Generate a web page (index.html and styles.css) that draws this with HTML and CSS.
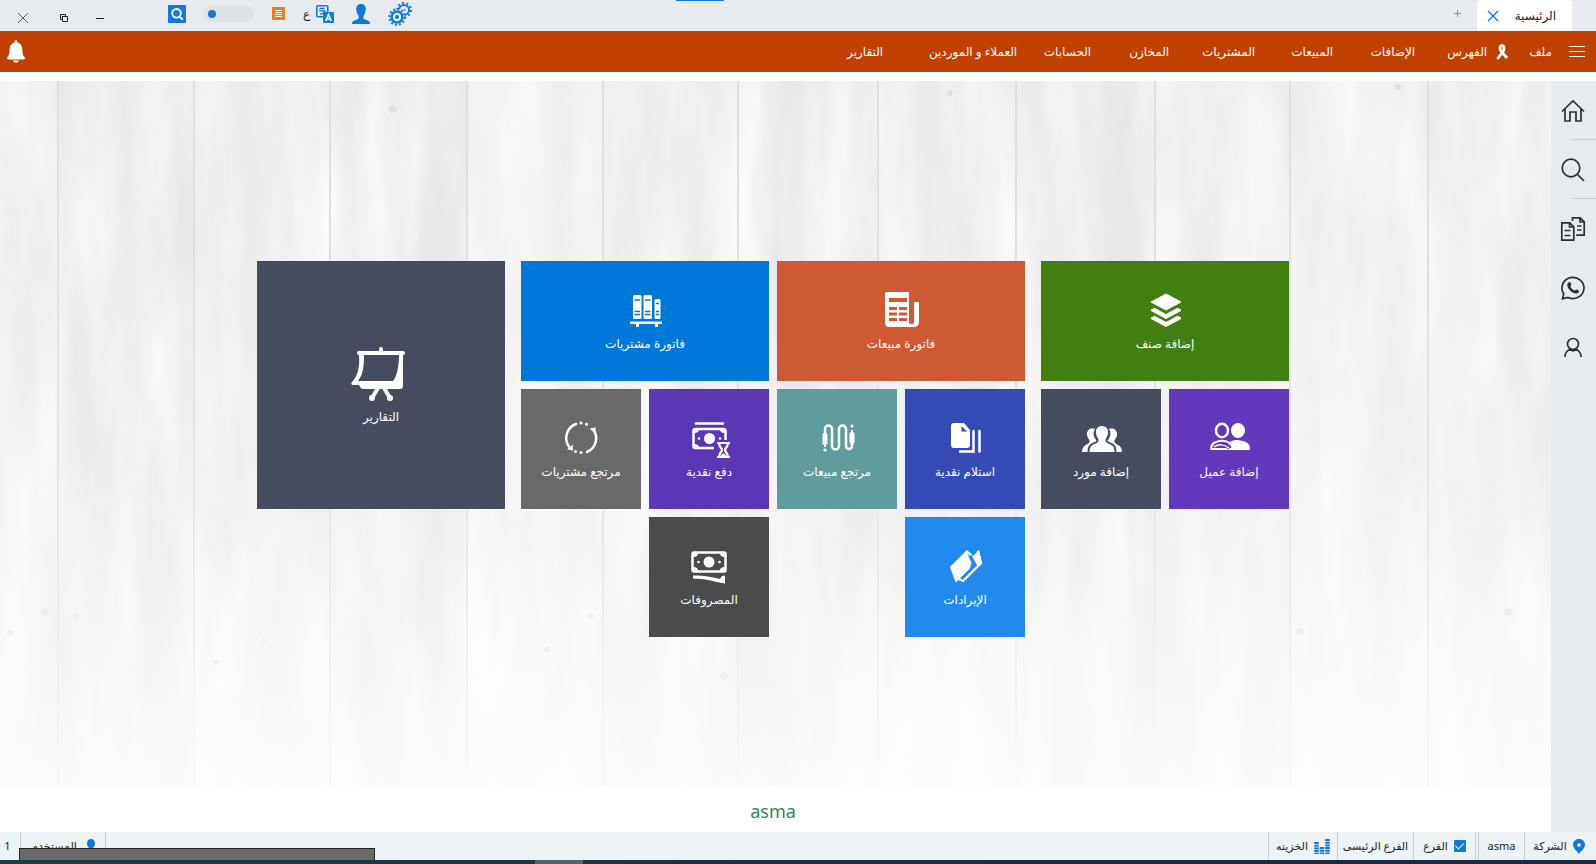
FILE: index.html
```html
<!DOCTYPE html>
<html lang="ar" dir="rtl">
<head>
  <meta charset="UTF-8">
  <title>الرئيسية</title>
  <meta name="viewport" content="width=device-width, initial-scale=1.0">
  <link rel="stylesheet" href="styles.css">
</head>
<body>

  <!-- Title bar -->
  <header class="titlebar">
    <div class="tab">
      <a href="#">الرئيسية</a>
      <button class="tab-close" aria-label="إغلاق التبويب">
        <svg width="12" height="12" viewBox="0 0 12 12"><path d="M1 1l10 10M11 1L1 11" stroke="#0f7ad8" stroke-width="1.4"/></svg>
      </button>
    </div>
    <button class="tab-add" aria-label="تبويب جديد">
      <svg width="7" height="7" viewBox="0 0 7 7"><path d="M3.500 0v7M0 3.500h7" stroke="#8b8f94"/></svg>
    </button>

    <div class="tools">
      <button aria-label="الإعدادات">
        <svg width="24" height="24" viewBox="0 0 24 24" fill="none" stroke="#0f7ad8">
          <circle cx="16" cy="8" r="5" stroke-width="2"/>
          <circle cx="16" cy="8" r="7" stroke-width="2" stroke-dasharray="2 2.4"/>
          <circle cx="9" cy="15" r="8" fill="#e7ebf0" stroke="none"/>
          <circle cx="9" cy="15" r="5.5" stroke-width="2.6"/>
          <circle cx="9" cy="15" r="7.8" stroke-width="2" stroke-dasharray="2 2.08"/>
          <circle cx="9" cy="15" r="2" fill="#0f7ad8" stroke="none"/>
          <circle cx="16.5" cy="8" r="1" fill="#0f7ad8" stroke="none"/>
        </svg>
      </button>
      <button aria-label="المستخدم">
        <svg width="18" height="20" viewBox="0 0 18 20" fill="#0f7ad8"><path d="M9 0c3 0 5 2 4.800 5.500C13.600 9 12 11 11.300 12v2c.3 1 1.700 1.500 3.700 2.200 2 .7 3 1.500 3 3.800H0c0-2.300 1-3.100 3-3.800 2-.7 3.400-1.200 3.700-2.200v-2C6 11 4.400 9 4.200 5.500 4 2 6 0 9 0z"/></svg>
      </button>
      <button class="lang" aria-label="اللغة">
        <svg width="18" height="18" viewBox="0 0 18 18">
          <rect x=".8" y=".8" width="11" height="11" rx="1" fill="#e7ebf0" stroke="#0f7ad8" stroke-width="1.600"/>
          <path d="M3.500 3.500h5M3 5.800h6.500M9 6c-1 2-3 3-5 3.300" fill="none" stroke="#0f7ad8" stroke-width="1.300"/>
          <rect x="7" y="7" width="11" height="11" rx="1" fill="#0f7ad8"/>
          <path d="M9.800 16l2.700-6.500 2.700 6.500M10.800 14h3.400" fill="none" stroke="#fff" stroke-width="1.500"/>
        </svg>
        <span>ع</span>
      </button>
      <button aria-label="القائمة">
        <svg width="13" height="13" viewBox="0 0 13 13"><path fill="#ee7d22" d="M0 0h13v13H0z"/><path d="M3 3.500h7M3 5.500h7M3 7.500h7M3 9.500h7" stroke="#fff"/></svg>
      </button>
      <input class="switch" type="checkbox" role="switch" aria-label="الوضع">
      <button aria-label="بحث">
        <svg width="18" height="18" viewBox="0 0 18 18"><rect width="18" height="18" rx="1" fill="#0f7ad8"/><circle cx="8.500" cy="8.300" r="4.300" fill="none" stroke="#fff" stroke-width="1.800"/><path d="M11.500 11.500l3.200 3.200" stroke="#fff" stroke-width="2"/></svg>
      </button>
    </div>

    <div class="window-buttons">
      <button aria-label="تصغير">
        <svg width="8" height="8" viewBox="0 0 8 8"><path d="M0 4.500h8" stroke="#222"/></svg>
      </button>
      <button aria-label="استعادة">
        <svg width="8" height="8" viewBox="0 0 8 8"><path d="M2.500 5.500h-2v-5h5v2M2.500 2.500h5v5h-5z" fill="none" stroke="#222"/></svg>
      </button>
      <button class="window-close" aria-label="إغلاق">
        <svg width="10" height="10" viewBox="0 0 10 10"><path d="M0 0l10 10M10 0L0 10" stroke="#333" stroke-width=".8"/></svg>
      </button>
    </div>
    <span class="drag-mark"></span>
  </header>

  <!-- Main menu -->
  <nav class="menu">
    <button class="menu-toggle" aria-label="القائمة الرئيسية">
      <svg width="16" height="11" viewBox="0 0 16 11"><path d="M0 .5h16M0 5.500h16M0 10.500h16" stroke="#fff"/></svg>
    </button>
    <a href="#" class="menu-file">ملف</a>
    <svg class="ribbon" width="14" height="16" viewBox="0 0 14 16" fill="none" stroke="#fff"><path d="M2.500 15L8.500 6.500C9.500 4 9 1.300 7 1.300S4.500 4 5.500 6.500L12 14" stroke-width="2.800"/></svg>
    <div class="menu-items">
      <a href="#">الفهرس</a>
      <a href="#">الإضافات</a>
      <a href="#">المبيعات</a>
      <a href="#">المشتريات</a>
      <a href="#">المخازن</a>
      <a href="#">الحسابات</a>
      <a href="#">العملاء و الموردين</a>
      <a href="#">التقارير</a>
    </div>
    <button class="bell" aria-label="التنبيهات">
      <svg width="18" height="23" viewBox="0 0 18 23" fill="#fff"><circle cx="9" cy="1.800" r="1.600"/><path d="M9 2.500c4 0 6 2.500 6.300 6.500.3 5 .7 6.500 2.700 8.500 0 1.500-1 2-2 2H2c-1 0-2-.5-2-2 2-2 2.400-3.500 2.700-8.500C3 5 5 2.500 9 2.500z"/><path d="M6 20.500h6c-.5 1.400-1.500 2.200-3 2.200s-2.500-.8-3-2.200z"/></svg>
    </button>
  </nav>

  <div class="workspace">

    <aside class="sidebar">
      <button aria-label="الرئيسية">
        <svg width="24" height="24" viewBox="0 0 24 24"><path d="M1 12.500L12 2l11 10.500M4 10v12h5v-9h6v9h5V10"/></svg>
      </button>
      <button aria-label="بحث">
        <svg width="24" height="24" viewBox="0 0 24 24"><circle cx="10" cy="10" r="8.800"/><path d="M16.500 16.500L23 23"/></svg>
      </button>
      <button aria-label="مستندات">
        <svg width="24" height="24" viewBox="0 0 24 24"><path d="M.8 5.800h8l4 4v13.400H.8zM8.500 6v4H13M3.500 13.500h6M3.500 18.500h6M11.500 4V.8h7.700l4 4v13.400h-8M19 1v4h4M16 9h4.500M16 13h4.500"/></svg>
      </button>
      <button aria-label="واتساب">
        <svg width="24" height="24" viewBox="0 0 24 24"><path d="M1.500 22.800l1.200-5A11 10.600 0 1 1 7 21.500z"/><path class="solid" d="M7.500 6.500c1-.8 1.800-.4 2.200.6l.6 1.500c.2.700-.8 1.300-.8 1.900.7 1.900 2.200 3.200 4 4 .8.100 1.200-1.200 2-1.100l2 1c.7.400.6 1.600-.2 2.300-1.500 1.400-3.800 1-6-.4-2.600-1.700-4.400-4-4.900-6.300-.3-1.400 0-2.600 1.100-3.500z"/></svg>
      </button>
      <button aria-label="الحساب">
        <svg width="24" height="24" viewBox="0 0 24 24"><circle cx="12" cy="9" r="5.500"/><path d="M4 22c0-5 3-7 5.500-8 1 2.500 4 2.500 5 0 2.500 1 5.500 3 5.500 8"/></svg>
      </button>
    </aside>

    <main class="desktop">
      <!-- Painted wood planks behind the tiles -->
      <svg class="wood" viewBox="0 0 1551 705" preserveAspectRatio="none" aria-hidden="true">
        <defs>
          <filter id="grain" x="0" y="0" width="100%" height="100%">
            <feTurbulence type="fractalNoise" baseFrequency="0.022 0.004" numOctaves="4" seed="7"/>
            <feColorMatrix values="0 0 0 0 1  0 0 0 0 1  0 0 0 0 1  1.5 0 0 0 -0.45"/>
          </filter>
          <linearGradient id="fade" x1="0" y1="0" x2="0" y2="1">
            <stop offset="0" stop-color="#fff" stop-opacity="0"/>
            <stop offset=".5" stop-color="#fff" stop-opacity=".15"/>
            <stop offset="1" stop-color="#fff" stop-opacity=".8"/>
          </linearGradient>
        </defs>
        <path fill="#eaeaea" d="M0 0h1551v705H0z"/>
        <path fill="#e6e6e6" d="M58 0h136v705H58zM330 0h137v705H330zM738 0h140v705H738zM1016 0h139v705h-139z"/>
        <path fill="#ededed" d="M467 0h136v705H467zM1290 0h138v705h-138z"/>
        <path filter="url(#grain)" d="M0 0h1551v705H0z"/>
        <path fill="none" stroke="#dedede" stroke-width="2" d="M58 0v705M194 0v705M330 0v705M467 0v705M603 0v705M738 0v705M878 0v705M1016 0v705M1155 0v705M1290 0v705M1428 0v705"/>
        <g fill="#e0e0e0">
          <circle cx="45" cy="530" r="4"/><circle cx="10" cy="551" r="3"/><circle cx="76" cy="534" r="3"/><circle cx="216" cy="581" r="3"/><circle cx="264" cy="559" r="3"/><circle cx="393" cy="28" r="4"/><circle cx="547" cy="568" r="3"/><circle cx="591" cy="535" r="3"/><circle cx="724" cy="594" r="4"/><circle cx="950" cy="12" r="3"/><circle cx="1398" cy="6" r="3"/><circle cx="1300" cy="550" r="4"/><circle cx="1508" cy="530" r="4"/>
        </g>
        <path fill="url(#fade)" d="M0 0h1551v705H0z"/>
      </svg>

      <div class="tiles">
        <section class="group">
          <button class="tile wide green">
            <svg viewBox="0 0 40 40"><path d="M21 4l15 8-15 8-15-8z" stroke="#fff" stroke-linejoin="round"/><path d="M6 19.500l3.500-1.800L21 24l11.500-6.300 3.500 1.800v1.500l-15 8-15-8zM6 27.500l3.500-1.800L21 32l11.500-6.300 3.500 1.800V29l-15 8-15-8z"/></svg>
            <span>إضافة صنف</span>
          </button>
          <button class="tile violet">
            <svg viewBox="0 0 40 40"><ellipse cx="13" cy="12.500" rx="6" ry="6.700" fill="none" stroke="#fff" stroke-width="2.500"/><ellipse cx="29" cy="12.500" rx="7" ry="7.500"/><path d="M15 32h26c.500-7-4-9-12-10-6 0-9 2-10 4 3 1 4 3 3 4z"/><path d="M20 24.500c-4-2.500-10-2.500-14 0-3 1.500-4 3.500-3.700 6.500H18" fill="none" stroke="#fff" stroke-width="2"/><path d="M5 29c4-3 10-3 15 1" fill="none" stroke="#fff" stroke-width="1.500"/></svg>
            <span>إضافة عميل</span>
          </button>
          <button class="tile slate">
            <svg viewBox="0 0 40 40"><path d="M21 8c4 0 6.500 3 6 7-.4 3-1.500 5-2.500 6v2c1 2 3 2.500 5 3.500 3 1.500 4 3.500 4 7.500H8.500c0-4 1-6 4-7.500 2-1 4-1.500 5-3.500v-2c-1-1-2.100-3-2.500-6-.5-4 2-7 6-7z"/><path d="M14 11c-4-1.500-8 .5-8 5 0 3 1.500 5 2.500 6v2C7.500 27 1 26.500 1 34h5.500c0-5 1.500-7.500 5-9 1.500-.8 3-1 4-2.500C12.500 19 11.500 15 14 11zM28 11c4-1.500 8 .5 8 5 0 3-1.500 5-2.500 6v2c1 3 7.500 2.500 7.500 10h-5.500c0-5-1.500-7.500-5-9-1.500-.8-3-1-4-2.500C29.500 19 30.500 15 28 11z"/></svg>
            <span>إضافة مورد</span>
          </button>
        </section>

        <section class="group group-invoices">
          <button class="tile wide orange">
            <svg viewBox="0 0 40 40"><path fill-rule="evenodd" d="M5 2h23v30c0 3 5 3 5 0V12h2.500c1.500 0 2.500 0 2.500 1v19c0 3-2 5-5 5H8c-2.500 0-4-1.500-4-4V3zM8 8v4h18V8zM8 17v3h8v-3zM18 17v3h8v-3zM8 22.500v3h8v-3zM18 22.500v3h8v-3zM8 28v3h8v-3zM18 28v3h8v-3z"/></svg>
            <span>فاتورة مبيعات</span>
          </button>
          <button class="tile wide blue">
            <svg viewBox="0 0 40 40"><rect x="8" y="5" width="8.500" height="24" rx="1.500"/><rect x="18.500" y="5" width="8.500" height="24" rx="1.500"/><rect x="29.500" y="9" width="6" height="20" rx="1.500"/><path d="M5 31.500h32V34h-4v3h-3v-3H14v3h-3v-3H5z"/><path d="M9.500 10h5.500M9.500 21.500h5.500M9.500 24.500h5.500M20 10h5.500M20 21.500h5.500M20 24.500h5.500M31 13.500h3M31 21.500h3M31 24.500h3" stroke="#0078d9" stroke-width="1.300"/></svg>
            <span>فاتورة مشتريات</span>
          </button>
          <button class="tile indigo">
            <svg viewBox="0 0 40 40"><path fill-rule="evenodd" d="M9 5h10l6 7v15c0 2-1 3-3 3H9c-2 0-3-1-3-3V8c0-2 1-3 3-3zM16.500 8v5.500H22z"/><path d="M15 33.500h13.500V13M34.500 13v20.500" fill="none" stroke="#fff" stroke-width="2.500" stroke-linecap="round"/></svg>
            <span>استلام نقدية</span>
          </button>
          <button class="tile teal">
            <svg viewBox="0 0 40 40"><path d="M8 17v-6a3.500 3.500 0 0 1 7 0v17a3.500 3.500 0 0 0 7 0V11a3.500 3.500 0 0 1 7 0v17a3 3 0 0 0 6 0v-4" fill="none" stroke="#fff" stroke-width="2.500"/><rect x="5.500" y="15" width="5" height="12" rx="2"/><rect x="32.500" y="14" width="5" height="12" rx="2"/><path d="M7 25h2v4H7zM34 12h2v4h-2z"/><circle cx="8" cy="32" r="1.600"/><circle cx="35" cy="8" r="1.600"/></svg>
            <span>مرتجع مبيعات</span>
          </button>
          <button class="tile purple">
            <svg viewBox="0 0 40 40"><path d="M7 5.500h27" stroke="#fff" stroke-width="2.500" stroke-linecap="round"/><path d="M25 30H6.500c-1.500 0-2-.5-2-2V13c0-1.500.5-2 2-2h28c1.500 0 2 .5 2 2v9" fill="none" stroke="#fff" stroke-width="2.500"/><path d="M5 11h5c0 3-2 4-5 4zM36 11h-5c0 3 2 4 5 4zM5 30h5c0-3-2-4-5-4z"/><circle cx="20.500" cy="20.500" r="5.500"/><circle cx="10" cy="20.500" r="1.300"/><circle cx="31" cy="20.500" r="1.300"/><path d="M28 25h13M28 39h13M30 25c0 4 3 5 3 7s-3 3-3 7M39 25c0 4-3 5-3 7s3 3 3 7" fill="none" stroke="#fff" stroke-width="2.200"/><path d="M31.500 38l3-3 3 3z"/></svg>
            <span>دفع نقدية</span>
          </button>
          <button class="tile gray">
            <svg viewBox="0 0 40 40"><path d="M15 6A15 15 0 0 0 9 30M32 11a15 15 0 0 1-6 23" fill="none" stroke="#fff" stroke-width="2.500" stroke-linecap="round"/><path d="M6 31.500l6-5v6zM28.500 10.500l6.500-1-1 6z"/><circle cx="20" cy="5" r="1.500"/><circle cx="25.500" cy="6.300" r="1.500"/><circle cx="14.500" cy="33.500" r="1.500"/><circle cx="20" cy="34.500" r="1.500"/></svg>
            <span>مرتجع مشتريات</span>
          </button>
          <button class="tile sky">
            <svg viewBox="0 0 40 40"><path d="M5.500 21L21 5.500 26 17l-2 6-13 13z" stroke="#fff" stroke-linejoin="round"/><path d="M21 5l5 4M33 5l3 12-18 18-4-2" fill="none" stroke="#fff" stroke-width="2.300" stroke-linejoin="round"/><path d="M23 5l5 5 6-6 3 14-4 3-6-11z"/></svg>
            <span>الإيرادات</span>
          </button>
          <button class="tile dark">
            <svg viewBox="0 0 40 40"><rect x="3.500" y="6.500" width="33" height="19" rx="1.500" fill="none" stroke="#fff" stroke-width="2.500"/><path d="M4 7h5c0 3-2 4-5 4zM36 7h-5c0 3 2 4 5 4zM4 25h5c0-3-2-4-5-4zM36 25h-5c0-3 2-4 5-4z"/><circle cx="20" cy="16" r="5.500"/><circle cx="9.500" cy="16" r="1.300"/><circle cx="30.500" cy="16" r="1.300"/><path d="M4 29.500c12 0 18 1.500 27 3.500l2-3 3-.5v8c-12-2-20-5-32-5z"/></svg>
            <span>المصروفات</span>
          </button>
        </section>

        <section class="group">
          <button class="tile big slate">
            <svg viewBox="0 0 56 56"><path fill-rule="evenodd" d="M26 6V4a2 2 0 0 1 4 0v2h20a2 2 0 0 1 0 4v30c0 3-1 4-3 4H10c-2 0-3-2-4-4H0c-2 0-2-2-1-3 6-6 8-16 7-27H6a2 2 0 0 1 0-4zM11 10c0 11-1 20-6 26h35c4-5 6-15 6-26z"/><path d="M25 43l-6 10M31 43l6 10" stroke="#fff" stroke-width="4"/><circle cx="19" cy="53" r="3"/><circle cx="37" cy="53" r="3"/></svg>
            <span>التقارير</span>
          </button>
        </section>
      </div>

      <p class="company">asma</p>
    </main>
  </div>

  <!-- Status bar -->
  <footer class="status">
    <div class="cell cell-company">
      <svg width="12" height="15" viewBox="0 0 12 15"><path fill="#0f7ad8" d="M6 0c3.500 0 6 2.500 6 6 0 3-3 5-6 9-3-4-6-6-6-9 0-3.500 2.500-6 6-6z"/><circle cx="6" cy="6" r="1.800" fill="#fff"/></svg>
      <span>الشركة</span>
    </div>
    <div class="cell cell-name">asma</div>
    <label class="cell cell-branch"><input type="checkbox" checked> الفرع</label>
    <div class="cell cell-main">الفرع الرئيسى</div>
    <div class="cell cell-safe">
      <svg width="16" height="15" viewBox="0 0 16 15"><path d="M2.500 3v12M8 8v7M13.500 0v15" stroke="#0f7ad8" stroke-width="4.500" stroke-dasharray="2 .7"/></svg>
      <span>الخزينه</span>
    </div>
    <div class="cell cell-user">
      <svg width="8" height="14" viewBox="0 0 8 14"><path fill="#0f7ad8" d="M4 0c2.500 0 4 2 4 4.500S6.500 8 5.500 9.500V14h-3V9.500C1.500 8 0 7 0 4.500S1.500 0 4 0z"/></svg>
      <span>المستخدم</span>
    </div>
    <div class="cell cell-count">1</div>
    <span class="preview"></span>
  </footer>
  <div class="taskbar"><span></span></div>

</body>
</html>
```
FILE: styles.css
```css
* {
  box-sizing: border-box;
}

body {
  margin: 0;
  min-height: 100vh;
  display: flex;
  flex-direction: column;
  background: #fff;
  color: #222;
  font-family: "Noto Sans", "DejaVu Sans", sans-serif;
  font-size: 12px;
  line-height: 20px;
}

button {
  display: flex;
  align-items: center;
  justify-content: center;
  padding: 0;
  border: none;
  background: none;
  color: inherit;
  font: inherit;
  cursor: pointer;
}

a {
  color: inherit;
  text-decoration: none;
}

svg {
  display: block;
  flex-shrink: 0;
  overflow: visible;
}

/* Title bar */
.titlebar {
  position: relative;
  display: flex;
  align-items: center;
  height: 31px;
  padding-right: 24px;
  background: #e7ebf0;
}

.drag-mark {
  position: absolute;
  top: 0;
  left: 676px;
  width: 48px;
  height: 1px;
  background: #0f7ad8;
}

.tab {
  display: flex;
  align-items: center;
  justify-content: space-between;
  width: 95px;
  height: 31px;
  padding: 0 16px 0 10px;
  background: #fff;
  border-radius: 4px 4px 0 0;
}

.tab-add {
  margin-right: 16px;
  padding-bottom: 4px;
}

.tools {
  display: flex;
  align-items: center;
  gap: 18px;
  margin-right: auto;
  padding-bottom: 4px;
}

.lang {
  gap: 6px;
}

.switch {
  appearance: none;
  width: 50px;
  height: 16px;
  margin: 0;
  padding: 4px;
  border-radius: 8px;
  background: #dde2e7;
  direction: ltr;
}

.switch::before {
  content: "";
  display: block;
  width: 8px;
  height: 8px;
  border-radius: 50%;
  background: #0f7ad8;
}

.window-buttons {
  display: flex;
  margin-right: 50px;
  padding-top: 5px;
}

.window-buttons button {
  width: 36px;
  height: 24px;
}

.window-buttons .window-close {
  width: 46px;
}

/* Menu */
.menu {
  display: flex;
  align-items: center;
  height: 41px;
  padding: 0 11px 0 7px;
  background: #c04000;
  color: #fff;
}

.menu-file {
  margin-right: 17px;
}

.ribbon {
  margin: 0 20px 0 8px;
}

.menu-items {
  display: grid;
  grid-template-columns: 72px 82px 78px 86px 78px 74px 134px auto;
  white-space: nowrap;
}

.bell {
  margin-right: auto;
}

/* Workspace */
.workspace {
  flex: 1;
  display: flex;
  margin-top: 9px;
}

.sidebar {
  width: 45px;
  background: #e7ebf0;
}

.sidebar button {
  width: 45px;
  height: 59px;
  padding-right: 2px;
}

.sidebar button:nth-child(-n+2) {
  background: linear-gradient(#c9ced4, #c9ced4) right bottom / 24px 1px no-repeat;
}

.sidebar svg {
  fill: none;
  stroke: #2a2e35;
  stroke-width: 1.7;
}

.sidebar .solid {
  fill: #2a2e35;
  stroke: none;
}

.desktop {
  position: relative;
  flex: 1;
  display: flex;
  flex-direction: column;
  align-items: center;
  justify-content: space-between;
  padding: 180px 5px 11px 0;
}

.wood {
  position: absolute;
  top: 0;
  left: 0;
  width: 100%;
  height: 94%;
}

/* Tiles */
.tiles {
  position: relative;
  display: flex;
  align-items: flex-start;
  gap: 16px;
}

.group {
  display: grid;
  grid-template-columns: repeat(2, 120px);
  grid-auto-rows: 120px;
  gap: 8px;
}

.group-invoices {
  grid-template-columns: repeat(4, 120px);
}

.tile {
  flex-direction: column;
  gap: 4px;
  padding-top: 2px;
  color: #fff;
}

.tile svg {
  width: 40px;
  height: 40px;
  fill: #fff;
}

.wide {
  grid-column: span 2;
}

.big {
  grid-column: span 2;
  grid-row: span 2;
  gap: 6px;
}

.big svg {
  width: 56px;
  height: 56px;
}

.green { background: #417f11; }
.violet { background: #6239bb; }
.slate { background: #454c5d; }
.orange { background: #cd5a33; }
.blue { background: #0078d9; }
.indigo { background: #364ab5; }
.teal { background: #5f9d9d; }
.purple { background: #5b37b5; }
.gray { background: #696969; }
.dark { background: #4b4b4b; }

.sky {
  grid-column: 1;
  background: #228aed;
}

.dark {
  grid-column: 3;
}

.company {
  position: relative;
  margin: 0;
  color: #2e8b57;
  font-size: 18px;
}

/* Status bar */
.status {
  position: relative;
  display: flex;
  height: 28px;
  padding-right: 3px;
  background: #edf2f5;
  font-size: 11px;
}

.cell {
  display: flex;
  align-items: center;
  justify-content: center;
  gap: 6px;
  border-left: 1px solid #c5cbd1;
  white-space: nowrap;
}

.cell-company { width: 69px; }
.cell-name { width: 46px; }
.cell-branch {
  width: 63px;
  border-right: 1px solid #c5cbd1;
  margin-right: 2px;
}
.cell-main { width: 76px; }
.cell-safe { width: 69px; }

.cell-branch input {
  appearance: none;
  width: 12px;
  height: 12px;
  margin: 0;
  border-radius: 1px;
  background: #0f7ad8;
}

.cell-branch input:checked::before {
  content: "";
  display: block;
  width: 4px;
  height: 7px;
  margin: 1px 4px;
  border: solid #fff;
  border-width: 0 1px 1px 0;
  transform: rotate(45deg);
}

.cell-user {
  width: 86px;
  gap: 10px;
  margin-right: auto;
  border-right: 1px solid #c5cbd1;
}

.cell-count {
  width: 20px;
  padding-right: 5px;
  border-left: none;
}

.preview {
  position: absolute;
  left: 19px;
  bottom: 0;
  width: 356px;
  height: 12px;
  border: 1px solid #222;
  border-bottom: none;
  background: #6a6a6a;
}

.taskbar {
  height: 4px;
  padding-left: 535px;
  background: linear-gradient(to right, #1f3b44, #1a2840);
  direction: ltr;
}

.taskbar span {
  display: block;
  width: 48px;
  height: 4px;
  background: #50666f;
}
```
